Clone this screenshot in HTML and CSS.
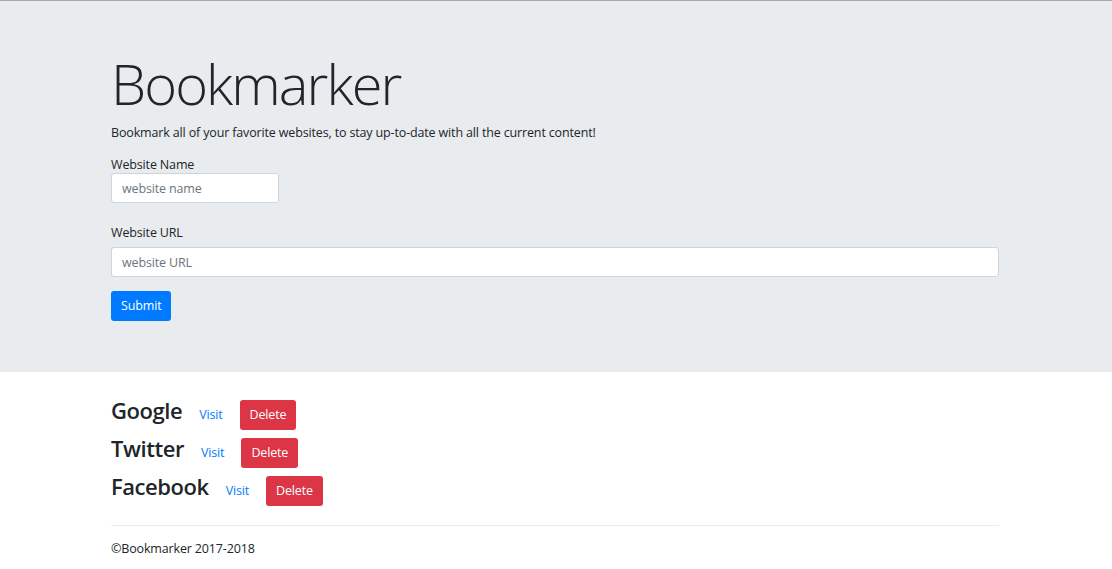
FILE: index.html
```html
<!DOCTYPE html>
<html lang="en">
<head>
<meta charset="utf-8">
<title>Bookmarker</title>
<link rel="stylesheet" href="styles.css">
</head>
<body>
<header class="jumbotron">
  <div class="container">
    <h1 class="display">Bookmarker</h1>
    <p class="intro">Bookmark all of your favorite websites, to stay up-to-date with all the current content!</p>
    <form class="bm-form">
      <div class="field field-name">
        <label class="field-label">Website Name</label>
        <input class="input input-short" type="text" placeholder="website name">
      </div>
      <div class="field field-url">
        <label class="field-label">Website URL</label>
        <input class="input" type="text" placeholder="website URL">
      </div>
      <button class="btn btn-primary" type="button">Submit</button>
    </form>
  </div>
</header>
<main class="container">
  <ul class="bookmarks">
    <li class="bookmark"><h3 class="bm-name">Google</h3><a class="bm-visit" href="#">Visit</a><button class="btn btn-danger" type="button">Delete</button></li>
    <li class="bookmark"><h3 class="bm-name">Twitter</h3><a class="bm-visit" href="#">Visit</a><button class="btn btn-danger" type="button">Delete</button></li>
    <li class="bookmark"><h3 class="bm-name">Facebook</h3><a class="bm-visit" href="#">Visit</a><button class="btn btn-danger" type="button">Delete</button></li>
  </ul>
  <footer class="footer">
    <p>&copy;Bookmarker 2017-2018</p>
  </footer>
</main>
</body>
</html>
```
FILE: styles.css
```css
* { box-sizing: border-box; }
html, body { margin: 0; padding: 0; }
body {
  font-family: "Open Sans", "Noto Sans", Arial, sans-serif;
  font-size: 12.5px;
  letter-spacing: -0.15px;
  line-height: 18px;
  color: #212529;
  background: #fff;
  border-top: 1px solid #a5a9ad;
}
.container {
  width: 888px;
  margin-left: 111px;
}
.jumbotron {
  background: #e9ecef;
  height: 371px;
  padding-top: 44px;
}
.display {
  margin: 0;
  font-weight: 300;
  font-size: 56px;
  line-height: 76px;
  letter-spacing: -1.9px;
}
.intro {
  margin: 3px 0 0;
}
.bm-form { margin-top: 14px; }
.field-label {
  display: block;
}
.field-name .input { margin-top: -1px; }
.field-name { margin-bottom: 21px; }
.field-url .input { margin-top: 5px; }
.input {
  display: block;
  width: 100%;
  height: 30px;
  padding: 0 10px;
  border: 1px solid #ced4da;
  border-radius: 3px;
  background: #fff;
  font-family: inherit;
  font-size: 12.5px;
  letter-spacing: -0.15px;
  color: #495057;
}
.input::placeholder { color: #6c757d; }
.input-short { width: 168px; }
.btn {
  display: inline-block;
  height: 30px;
  line-height: 30px;
  padding: 0 10px;
  border: none;
  border-radius: 3px;
  font-family: inherit;
  font-size: 12.5px;
  letter-spacing: -0.15px;
  color: #fff;
  cursor: pointer;
}
.btn-primary { background: #007bff; margin-top: 14px; }
.btn-danger { background: #dc3545; }
.bookmarks {
  list-style: none;
  margin: 0;
  padding: 19px 0 0;
}
.bookmark {
  display: flex;
  align-items: baseline;
  height: 38px;
}
.bm-name {
  margin: 0;
  font-size: 22px;
  line-height: 38px;
  font-weight: 600;
  letter-spacing: -0.45px;
}
.bm-visit {
  color: #007bff;
  text-decoration: none;
  margin-left: 17px;
  margin-right: 17px;
}
.footer {
  margin-top: 20px;
  border-top: 1px solid #e9ecef;
}
.footer p {
  margin: 0;
  padding-top: 14px;
}
```
